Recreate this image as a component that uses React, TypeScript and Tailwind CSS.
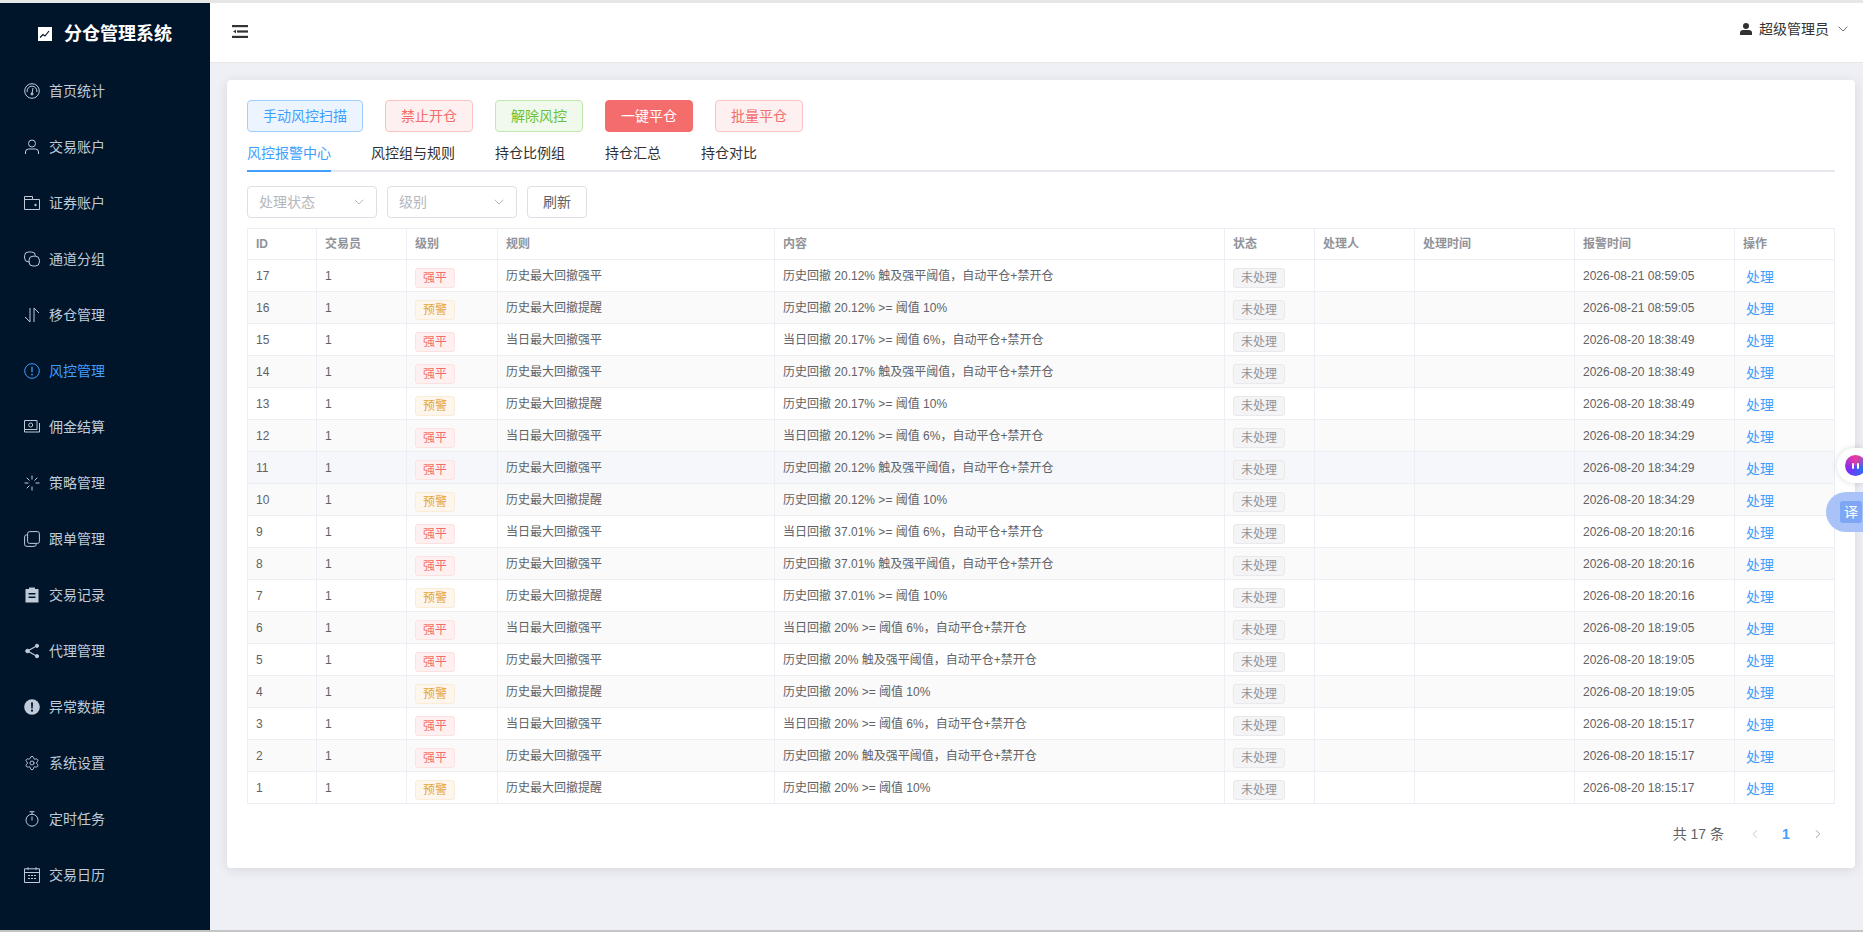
import { ChevronDown, ChevronLeft, ChevronRight, Settings } from "lucide-react";
import type { ReactNode } from "react";

const Ico = ({ children }: { children: ReactNode }) => (
    <svg viewBox="0 0 16 16" fill="none" stroke="currentColor" strokeWidth="1" className="w-4 h-4 shrink-0">
        {children}
    </svg>
);

const menu: { label: string; icon: ReactNode; active?: boolean }[] = [
    {
        label: "首页统计",
        icon: (
            <Ico>
                <circle cx="8" cy="8" r="7.3" />
                <path d="M3.200 9a4.900 4.900 0 1 1 9.600 0" />
                <path d="M9 5 8 10.500" />
                <circle cx="8" cy="11" r="1" fill="currentColor" />
            </Ico>
        ),
    },
    {
        label: "交易账户",
        icon: (
            <Ico>
                <circle cx="8" cy="4.500" r="3.500" />
                <path d="M1.500 15v-2a3 3 0 0 1 3-3h7a3 3 0 0 1 3 3v2" />
            </Ico>
        ),
    },
    {
        label: "证券账户",
        icon: (
            <Ico>
                <path d="M.5 1.500h8v3h7v10H.5z" />
                <path d="M8.500 4.500H.5" />
                <circle cx="11.500" cy="10" r=".8" fill="currentColor" />
            </Ico>
        ),
    },
    {
        label: "通道分组",
        icon: (
            <Ico>
                <path d="M5.500 10.800H4.300A3.700 3.700 0 0 1 .6 7.100V4.700A3.700 3.700 0 0 1 4.300 1h3.400a3.700 3.700 0 0 1 3.700 3.700v.5" />
                <rect x="5" y="5.200" width="10.400" height="9.800" rx="4" />
            </Ico>
        ),
    },
    {
        label: "移仓管理",
        icon: (
            <Ico>
                <path d="M6 1v14L1 10" />
                <path d="M10 15V1l5 5" />
            </Ico>
        ),
    },
    {
        label: "风控管理",
        active: true,
        icon: (
            <Ico>
                <circle cx="8" cy="8" r="7.300" />
                <path d="M8 3.800v5.400" strokeWidth="1.300" />
                <circle cx="8" cy="11.600" r=".9" fill="currentColor" stroke="none" />
            </Ico>
        ),
    },
    {
        label: "佣金结算",
        icon: (
            <Ico>
                <path d="M.5 1.500h12.500v9H.5z" />
                <circle cx="6.700" cy="6" r="2" />
                <path d="M3 13h12.500V4" />
                <path d="M.5 10.500V13H3" />
            </Ico>
        ),
    },
    {
        label: "策略管理",
        icon: (
            <Ico>
                <path d="M8 .5v4M8 11.500v4M.5 8h4M11.500 8h4M13.300 2.700l-2.800 2.800M2.700 13.300l2.800-2.800M2.700 2.700l2.800 2.800" />
            </Ico>
        ),
    },
    {
        label: "跟单管理",
        icon: (
            <Ico>
                <rect x="3.600" y=".6" width="11.800" height="11.800" rx="2" />
                <path d="M3.600 3.800h-.8a2.200 2.200 0 0 0-2.200 2.200v7.200a2.200 2.200 0 0 0 2.200 2.200h7.200a2.200 2.200 0 0 0 2.200-2.200v-.8" />
            </Ico>
        ),
    },
    {
        label: "交易记录",
        icon: (
            <svg viewBox="0 0 16 16" className="w-4 h-4 shrink-0" fill="currentColor">
                <path d="M5 .5h6v1.500h3.500v13.500h-13V2H5zM4.500 6v1.500h7V6zm0 3.500V11h7V9.500z" fillRule="evenodd" />
            </svg>
        ),
    },
    {
        label: "代理管理",
        icon: (
            <svg viewBox="0 0 16 16" className="w-4 h-4 shrink-0" fill="currentColor" stroke="currentColor">
                <circle cx="3.500" cy="8" r="1.800" />
                <circle cx="13" cy="2.800" r="1.600" />
                <circle cx="13" cy="13.200" r="1.600" />
                <path d="M13 2.800 3.500 8l9.500 5.200" fill="none" strokeWidth="1.200" />
            </svg>
        ),
    },
    {
        label: "异常数据",
        icon: (
            <svg viewBox="0 0 16 16" className="w-4 h-4 shrink-0">
                <circle cx="8" cy="8" r="7.800" fill="currentColor" />
                <path d="M7 3.500h2L8.700 9.500H7.300z" fill="#00142a" />
                <circle cx="8" cy="11.700" r="1.100" fill="#00142a" />
            </svg>
        ),
    },
    {
        label: "系统设置",
        icon: <Settings className="w-4 h-4 shrink-0" strokeWidth={1.4} />,
    },
    {
        label: "定时任务",
        icon: (
            <Ico>
                <circle cx="8" cy="9.200" r="6" />
                <path d="M5.500.7h5M8 .7v2.500M8 5.500v4" />
            </Ico>
        ),
    },
    {
        label: "交易日历",
        icon: (
            <Ico>
                <path d="M.5 1.800h15v13.700H.5z" />
                <path d="M.5 5.500h15M4 .3v2.500M12 .3v2.500" />
                <path d="M4 8.500h2M7 8.500h2M10 8.500h2M4 11.500h2M7 11.500h2M10 11.500h2" />
            </Ico>
        ),
    },
];

type Row = [number, "强平" | "预警", string, string, string];

const rows: Row[] = [
    [17, "强平", "历史最大回撤强平", "历史回撤 20.12% 触及强平阈值，自动平仓+禁开仓", "2026-08-21 08:59:05"],
    [16, "预警", "历史最大回撤提醒", "历史回撤 20.12% >= 阈值 10%", "2026-08-21 08:59:05"],
    [15, "强平", "当日最大回撤强平", "当日回撤 20.17% >= 阈值 6%，自动平仓+禁开仓", "2026-08-20 18:38:49"],
    [14, "强平", "历史最大回撤强平", "历史回撤 20.17% 触及强平阈值，自动平仓+禁开仓", "2026-08-20 18:38:49"],
    [13, "预警", "历史最大回撤提醒", "历史回撤 20.17% >= 阈值 10%", "2026-08-20 18:38:49"],
    [12, "强平", "当日最大回撤强平", "当日回撤 20.12% >= 阈值 6%，自动平仓+禁开仓", "2026-08-20 18:34:29"],
    [11, "强平", "历史最大回撤强平", "历史回撤 20.12% 触及强平阈值，自动平仓+禁开仓", "2026-08-20 18:34:29"],
    [10, "预警", "历史最大回撤提醒", "历史回撤 20.12% >= 阈值 10%", "2026-08-20 18:34:29"],
    [9, "强平", "当日最大回撤强平", "当日回撤 37.01% >= 阈值 6%，自动平仓+禁开仓", "2026-08-20 18:20:16"],
    [8, "强平", "历史最大回撤强平", "历史回撤 37.01% 触及强平阈值，自动平仓+禁开仓", "2026-08-20 18:20:16"],
    [7, "预警", "历史最大回撤提醒", "历史回撤 37.01% >= 阈值 10%", "2026-08-20 18:20:16"],
    [6, "强平", "当日最大回撤强平", "当日回撤 20% >= 阈值 6%，自动平仓+禁开仓", "2026-08-20 18:19:05"],
    [5, "强平", "历史最大回撤强平", "历史回撤 20% 触及强平阈值，自动平仓+禁开仓", "2026-08-20 18:19:05"],
    [4, "预警", "历史最大回撤提醒", "历史回撤 20% >= 阈值 10%", "2026-08-20 18:19:05"],
    [3, "强平", "当日最大回撤强平", "当日回撤 20% >= 阈值 6%，自动平仓+禁开仓", "2026-08-20 18:15:17"],
    [2, "强平", "历史最大回撤强平", "历史回撤 20% 触及强平阈值，自动平仓+禁开仓", "2026-08-20 18:15:17"],
    [1, "预警", "历史最大回撤提醒", "历史回撤 20% >= 阈值 10%", "2026-08-20 18:15:17"],
];

const headers = ["ID", "交易员", "级别", "规则", "内容", "状态", "处理人", "处理时间", "报警时间", "操作"];
const widths = ["w-[69px]", "w-[90px]", "w-[91px]", "w-[277px]", "w-[450px]", "w-[90px]", "w-[100px]", "w-[160px]", "w-[160px]", "w-[100px]"];

const cell = "border border-[#ebeef5] px-2 py-0 text-left";

const App = () => {
    return (
        <div className="relative h-[932px] flex flex-col overflow-hidden border-t-[3px] border-t-[#e6e6e6] border-b-2 border-b-[#c4c4c4] bg-[#eff0f5] font-['Liberation_Sans','Noto_Sans_CJK_SC',sans-serif]">
            <div className="flex flex-1 min-h-0">
                <aside className="w-[210px] shrink-0 bg-[#00142a] flex flex-col">
                    <div className="h-[60px] pt-[2px] flex items-center justify-center gap-3 text-white">
                        <svg viewBox="0 0 14 14" className="w-[14px] h-[14px]">
                            <rect width="14" height="14" fill="#fff" />
                            <path d="M2 10.500 5 7.500l2 1.500 4-5" fill="none" stroke="#00142a" strokeWidth="1.200" />
                        </svg>
                        <span className="text-[18px] font-bold leading-none">分仓管理系统</span>
                    </div>
                    <nav className="flex flex-col">
                        {menu.map((m) => (
                            <div
                                key={m.label}
                                className={`h-[56px] flex items-center gap-[9px] pl-6 text-sm ${m.active ? "text-[#409eff]" : "text-[#bfcbd9]"}`}
                            >
                                {m.icon}
                                <span>{m.label}</span>
                            </div>
                        ))}
                    </nav>
                </aside>

                <div className="flex-1 min-w-0 flex flex-col">
                    <header className="h-[60px] shrink-0 bg-white border-b border-[#e6e6e6] flex items-center justify-between pl-[22px] pr-3">
                        <svg viewBox="0 0 16 13" className="w-4 h-[13px] mb-[2px] text-[#333]" fill="currentColor">
                            <rect width="16" height="2.200" />
                            <rect x="5" y="5.400" width="11" height="2.200" />
                            <path d="M1 6.500 4 4.800v3.400z" />
                            <rect y="10.800" width="16" height="2.200" />
                        </svg>
                        <div className="flex items-center mb-2 text-sm text-[#333]">
                            <svg viewBox="0 0 12 12" className="w-3 h-3 mr-[7px]" fill="#303133">
                                <circle cx="6" cy="3" r="3" />
                                <path d="M0 12V9.500C0 8 1.500 7 3 7h6c1.500 0 3 1 3 2.500V12z" />
                            </svg>
                            <span>超级管理员</span>
                            <ChevronDown className="w-4 h-4 ml-[6px] text-[#555]" strokeWidth={1.25} />
                        </div>
                    </header>

                    <main className="flex-1 min-h-0 pt-[17px] pl-[17px] pr-2">
                        <div className="bg-white rounded shadow-[0_2px_12px_rgba(0,0,0,0.1)] px-5 pt-5 h-[788px] flex flex-col">
                            <div className="flex gap-[22px]">
                                <button className="h-8 w-[116px] rounded border border-[#a0cfff] bg-[#ecf5ff] text-sm text-[#409eff]">手动风控扫描</button>
                                <button className="h-8 w-[88px] rounded border border-[#fbc4c4] bg-[#fef0f0] text-sm text-[#f56c6c]">禁止开仓</button>
                                <button className="h-8 w-[88px] rounded border border-[#c2e7b0] bg-[#f0f9eb] text-sm text-[#67c23a]">解除风控</button>
                                <button className="h-8 w-[88px] rounded border border-[#f56c6c] bg-[#f56c6c] text-sm text-white">一键平仓</button>
                                <button className="h-8 w-[88px] rounded border border-[#fbc4c4] bg-[#fef0f0] text-sm text-[#f56c6c]">批量平仓</button>
                            </div>

                            <div className="mt-[6px] h-[34px] flex gap-10 border-b-2 border-[#e4e7ed] text-sm text-[#303133]">
                                <div className="h-[34px] leading-[30px] border-b-2 border-[#409eff] text-[#409eff]">风控报警中心</div>
                                <div className="leading-[30px]">风控组与规则</div>
                                <div className="leading-[30px]">持仓比例组</div>
                                <div className="leading-[30px]">持仓汇总</div>
                                <div className="leading-[30px]">持仓对比</div>
                            </div>

                            <div className="mt-[14px] flex gap-[10px] text-sm">
                                <div className="h-8 w-[130px] rounded border border-[#dcdfe6] flex items-center justify-between pl-[11px] pr-[9px] text-[#b4b7bd]">
                                    处理状态
                                    <ChevronDown className="w-4 h-4 text-[#a8abb2]" strokeWidth={1.25} />
                                </div>
                                <div className="h-8 w-[130px] rounded border border-[#dcdfe6] flex items-center justify-between pl-[11px] pr-[9px] text-[#b4b7bd]">
                                    级别
                                    <ChevronDown className="w-4 h-4 text-[#a8abb2]" strokeWidth={1.25} />
                                </div>
                                <button className="h-8 w-[60px] rounded border border-[#dcdfe6] text-[#606266]">刷新</button>
                            </div>

                            <table className="mt-[10px] w-[1587px] table-fixed border-collapse text-xs text-[#606266]">
                                <colgroup>
                                    {widths.map((w, i) => (
                                        <col key={headers[i]} className={w} />
                                    ))}
                                </colgroup>
                                <thead>
                                    <tr className="h-[31px]">
                                        {headers.map((h) => (
                                            <th key={h} className={`${cell} font-bold text-[#909399]`}>{h}</th>
                                        ))}
                                    </tr>
                                </thead>
                                <tbody>
                                    {rows.map((r, i) => (
                                        <tr key={r[0]} className={`h-8 ${r[0] === 11 ? "bg-[#f5f7fa]" : i % 2 === 1 ? "bg-[#fafafa]" : "bg-white"}`}>
                                            <td className={cell}>{r[0]}</td>
                                            <td className={cell}>1</td>
                                            <td className={cell}>
                                                <span
                                                    className={`inline-flex h-5 w-10 items-center justify-center rounded-[3px] border mt-[5px] ${
                                                        r[1] === "强平"
                                                            ? "bg-[#fef0f0] border-[#fde2e2] text-[#f56c6c]"
                                                            : "bg-[#fdf6ec] border-[#faecd8] text-[#e6a23c]"
                                                    }`}
                                                >
                                                    {r[1]}
                                                </span>
                                            </td>
                                            <td className={cell}>{r[2]}</td>
                                            <td className={cell}>{r[3]}</td>
                                            <td className={cell}>
                                                <span className="inline-flex h-5 w-[52px] items-center justify-center rounded-[3px] border border-[#e9e9eb] bg-[#f4f4f5] text-[#909399] mt-[5px]">未处理</span>
                                            </td>
                                            <td className={cell}></td>
                                            <td className={cell}></td>
                                            <td className={cell}>{r[4]}</td>
                                            <td className={cell}>
                                                <span className="pl-[3px] text-sm leading-none text-[#409eff] relative top-[2px]">处理</span>
                                            </td>
                                        </tr>
                                    ))}
                                </tbody>
                            </table>

                            <div className="mt-[20px] mr-[10px] flex items-center justify-end text-[#606266]">
                                <span className="text-sm mr-6">共 17 条</span>
                                <ChevronLeft className="w-[14px] h-[14px] text-[#c0c4cc]" strokeWidth={1.5} />
                                <span className="ml-5 mr-[21px] w-[8px] text-sm font-bold text-[#409eff]">1</span>
                                <ChevronRight className="w-[14px] h-[14px] text-[#909399]" strokeWidth={1.5} />
                            </div>
                        </div>
                    </main>
                </div>
            </div>

            <div className="absolute right-0 top-[445px] w-[26px] h-[35px] rounded-l-full bg-white shadow-[0_0_6px_rgba(0,0,0,0.15)] flex items-center pl-2">
                <div className="w-[21px] h-[21px] shrink-0 rounded-full bg-[conic-gradient(#f0389a,#2b6cf6,#7b2ff7,#f0389a)] flex items-center justify-center gap-[3px]">
                    <span className="w-[2px] h-[6px] rounded-full bg-white" />
                    <span className="w-[2px] h-[6px] rounded-full bg-white" />
                </div>
            </div>
            <div className="absolute right-0 top-[489px] w-[37px] h-[40px] rounded-l-full bg-[#a9c3f8] flex items-center pl-[14px]">
                <div className="w-[22px] h-[22px] shrink-0 rounded-[3px] bg-[#7da7f5] text-white text-sm flex items-center justify-center">译</div>
            </div>
        </div>
    );
};

export default App;
